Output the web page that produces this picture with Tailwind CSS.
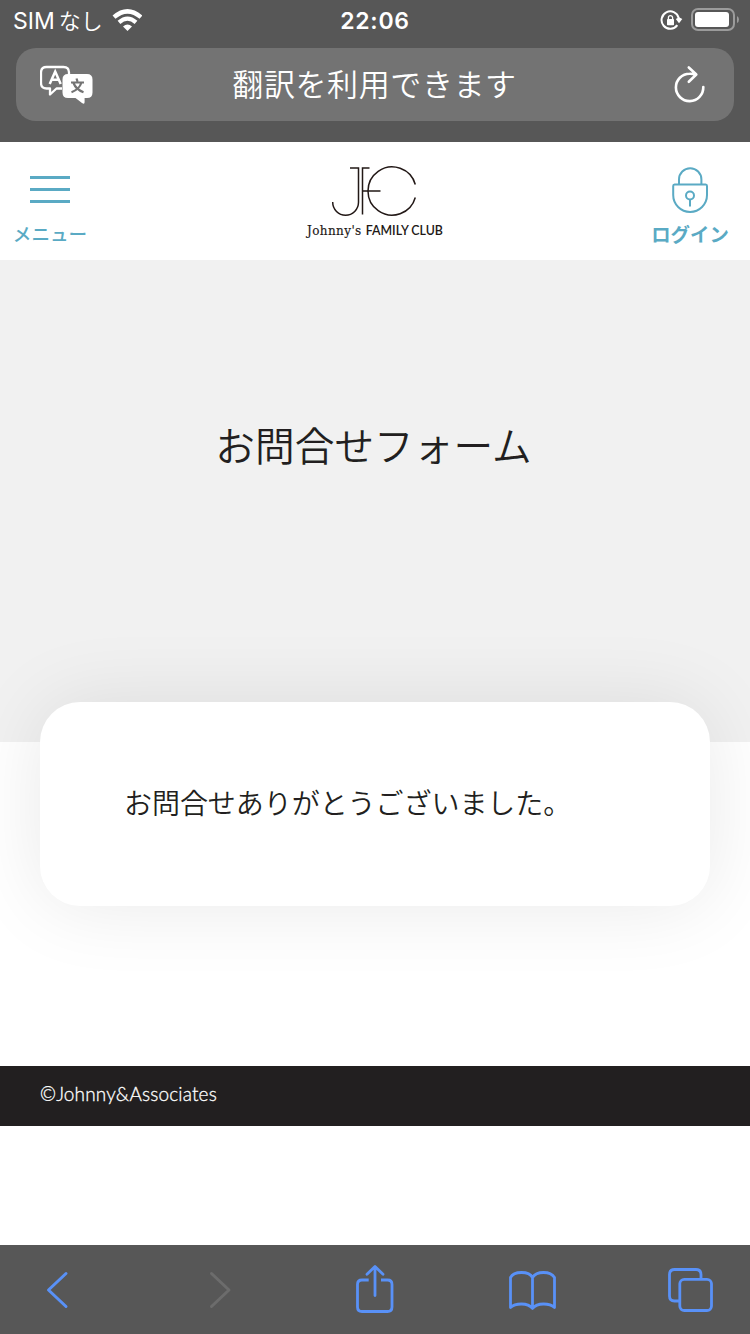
<!DOCTYPE html>
<html lang="ja">
  <head>
    <meta charset="UTF-8" />
    <meta name="viewport" content="width=device-width, initial-scale=1.0" />
    <title>お問合せフォーム</title>
    <script src="https://cdn.jsdelivr.net/npm/@tailwindcss/browser@4"></script>
  </head>
  <body
    class="flex h-[1334px] w-[750px] flex-col overflow-hidden bg-white font-['Noto_Sans_CJK_JP',sans-serif] text-[#221f20]"
  >
    <!-- Browser chrome -->
    <div class="h-[142px] shrink-0 bg-[#575757] px-4 text-white">
      <div class="grid h-12 grid-cols-3 items-start">
        <div class="-ml-[3px] flex h-10 items-center whitespace-nowrap">
          <span class="pt-px font-['Inter',sans-serif] text-[23px] leading-10">SIM</span>
          <span class="mb-[3px] ml-[4px] text-[22px] leading-10 font-[350]">なし</span>
          <svg class="ml-[9px] h-[23px] w-[30px]" viewBox="112 9 30 23" fill="none">
            <path d="M114 17.200Q127.500 5.500 141 17.200" stroke="white" stroke-width="4.400" />
            <path d="M119 22.300Q127.500 15 136 22.300" stroke="white" stroke-width="4.200" />
            <path d="M123 26.500Q127.500 22.700 132 26.500L127.500 31Z" fill="white" />
          </svg>
        </div>
        <div
          class="pt-px text-center font-['Inter',sans-serif] text-[23px] leading-10 font-semibold tracking-[0.7px]"
        >
          22:06
        </div>
        <div class="-mr-[5px] flex h-10 items-center justify-end gap-2">
          <svg class="h-[22px] w-[23px]" viewBox="660 9 23 22" fill="none">
            <path d="M678.700 18A8.700 8.700 0 1 0 677.300 25.200" stroke="white" stroke-width="2" />
            <path d="M675.800 19L679 17.300L682.300 19L679 23.300Z" fill="white" />
            <rect x="667" y="19" width="7" height="6.300" rx="0.800" fill="white" />
            <path d="M668.400 19.500V17.800a2.100 2.100 0 0 1 4.200 0V19.500" stroke="white" stroke-width="1.300" />
          </svg>
          <svg class="h-6 w-12" viewBox="691 8 48 24" fill="none">
            <rect x="692" y="9" width="42" height="21" rx="6" stroke="#9b9b9b" stroke-width="2" />
            <rect x="695" y="12" width="34" height="15" rx="3" fill="white" />
            <path d="M737 16v7q2-1 2-3.500T737 16" fill="#9b9b9b" />
          </svg>
        </div>
      </div>

      <!-- Address bar -->
      <div class="flex h-[73px] w-[718px] items-center justify-between rounded-[20px] bg-[#737373] pr-7 pl-6">
        <svg class="h-10 w-[53px]" viewBox="40 65 53 40" fill="none">
          <path
            d="M62 88.500H56.500L50 94.500V88.500H46.500Q41 88.500 41 83V72.500Q41 67 46.500 67H63.500Q69 67 69 72.500V74"
            stroke="white"
            stroke-width="2.300"
            stroke-linejoin="round"
          />
          <path d="M49.700 84L55.200 71.500L60.700 84M51.800 79.800H58.600" stroke="white" stroke-width="2.500" />
          <path
            d="M68 74H87Q92.500 74 92.500 79.500V92.500Q92.500 98 87 98H84.600V102Q84.600 105 82 103L75.500 98H68Q62.500 98 62.500 92.500V79.500Q62.500 74 68 74Z"
            fill="white"
          />
          <path
            d="M76.500 78.500L77.500 81.500M71 82.500H84M73.500 83Q76 89.500 83.500 92.200M81.300 83Q79 89.500 71.500 92.200"
            stroke="#737373"
            stroke-width="2.200"
          />
        </svg>
        <span class="mr-[18px] mb-1 text-[31px] leading-[46px] font-[350] tracking-[0.6px]">翻訳を利用できます</span>
        <svg class="mb-0.5 h-[38px] w-8" viewBox="674 64 32 38" fill="none" stroke="white" stroke-width="2.600" stroke-linecap="round" stroke-linejoin="round">
          <path d="M703.300 86A13.700 13.700 0 1 1 689.600 72.700Q693 72.600 695.800 73.800M688.800 66.500L696.300 73.500L688.800 80.800" />
        </svg>
      </div>
    </div>

    <!-- Site header -->
    <header class="flex h-[118px] shrink-0 justify-between text-[#5aaac4]">
      <button class="flex w-[100px] flex-col items-center pt-[34px]">
        <span class="flex w-10 flex-col gap-[9px]">
          <span class="h-[3px] bg-[#5aaac4]"></span>
          <span class="h-[3px] bg-[#5aaac4]"></span>
          <span class="h-[3px] bg-[#5aaac4]"></span>
        </span>
        <span class="mt-4 text-[18.6px] leading-7 font-medium">メニュー</span>
      </button>

      <div class="ml-5 flex w-[140px] flex-col items-center pt-[23px] text-[#221816]">
        <svg class="mr-0.5 h-[51px] w-[86px]" viewBox="331 165 86 51" fill="none" stroke="#221816" stroke-width="1.500">
          <path d="M350 168H358.500V202.300A12.900 12.900 0 0 1 332.700 202.300V202" />
          <path d="M369.500 168H362.500V214.500M362.500 191H380.500" />
          <path d="M415.300 184.500A24.100 24.100 0 1 0 415.300 197.500" />
        </svg>
        <div class="mt-[5px] flex items-baseline leading-5 whitespace-nowrap">
          <span class="font-['DejaVu_Serif',serif] text-[12px] tracking-[0.4px] [-webkit-text-stroke:0.15px]">Johnny's</span>
          <span class="ml-1 font-['Lato',sans-serif] text-[12.4px] font-semibold">FAMILY CLUB</span>
        </div>
      </div>

      <button class="flex w-[120px] flex-col items-center pt-[25px]">
        <svg class="h-[47px] w-[38px]" viewBox="671 167 38 47" fill="none" stroke="#5aaac4" stroke-width="2">
          <path d="M679 184V179.500a11.200 11.200 0 0 1 22.400 0V184" />
          <path d="M674.500 184.500H705.700Q707 184.500 707 186V195A16.900 16.900 0 0 1 673.200 195V186Q673.200 184.500 674.500 184.500Z" />
          <circle cx="690" cy="195.500" r="4" />
          <path d="M690 199.500V206.500" />
        </svg>
        <span class="mt-1.5 text-[19.4px] leading-7 font-bold">ログイン</span>
      </button>
    </header>

    <!-- Title -->
    <section class="h-[482px] shrink-0 bg-[#f1f1f1] pt-[154px] text-center">
      <h1 class="-ml-[3px] text-[39.7px] leading-[60px] font-[350]">お問合せフォーム</h1>
    </section>

    <!-- Message card -->
    <main
      class="relative mx-10 -mt-10 h-[204px] shrink-0 rounded-[40px] bg-white px-[84px] pt-[79px] shadow-[0_0_80px_rgba(0,0,0,0.09)]"
    >
      <p class="text-[28px] leading-[42px] font-[350] tracking-[-0.05px] whitespace-nowrap">お問合せありがとうございました。</p>
    </main>

    <footer
      class="mt-40 h-[60px] shrink-0 bg-[#221f20] pl-10 font-['Lato',sans-serif] text-[19px] leading-[55px] font-light tracking-[0.15px] text-white [-webkit-text-stroke:0.3px]"
    >
      ©Johnny&amp;Associates
    </footer>

    <!-- Bottom toolbar -->
    <nav class="mt-auto flex h-[89px] shrink-0 items-center bg-[#575757] pl-[46px] text-[#5991f7]">
      <svg class="h-[38px] w-6" viewBox="46 1271 24 38" fill="none" stroke="currentColor" stroke-width="3" stroke-linecap="round" stroke-linejoin="round">
        <path d="M66 1273.500L48.500 1290L66 1306.500" />
      </svg>
      <svg class="ml-[138px] h-[38px] w-6 text-[#6c6c6c]" viewBox="208 1271 24 38" fill="none" stroke="currentColor" stroke-width="3" stroke-linecap="round" stroke-linejoin="round">
        <path d="M211.500 1273.500L229 1290L211.500 1306.500" />
      </svg>
      <svg class="ml-[123px] h-[50px] w-10" viewBox="355 1265 40 50" fill="none" stroke="currentColor" stroke-width="2.800">
        <path d="M368.700 1280H362Q357.500 1280 357.500 1284.500V1307Q357.500 1311.500 362 1311.500H387.500Q392 1311.500 392 1307V1284.500Q392 1280 387.500 1280H381" />
        <path d="M375 1295.500V1267M367 1274.200L375 1266.500L383 1274.200" stroke-linecap="round" stroke-linejoin="round" />
      </svg>
      <svg class="ml-[113px] h-11 w-[50px]" viewBox="508 1268 50 44" fill="none" stroke="currentColor" stroke-width="2.800" stroke-linejoin="round">
        <path d="M532.500 1277.500Q530 1272.500 521.500 1272.500T510.500 1277.500V1307.500Q514 1304 521.500 1304T532.500 1308.500Q536 1304 543.500 1304T554.500 1307.500V1277.500Q551.500 1272.500 543.500 1272.500T532.500 1277.500V1308.500" />
      </svg>
      <svg class="ml-[110px] h-[46px] w-[46px]" viewBox="668 1267 46 46" fill="none" stroke="currentColor" stroke-width="2.800">
        <path d="M679.500 1301H674.500Q669.500 1301 669.500 1296V1274.500Q669.500 1269.500 674.500 1269.500H696Q701 1269.500 701 1274.500V1279" />
        <rect x="679.800" y="1279.300" width="31.700" height="31.200" rx="4.500" />
      </svg>
    </nav>
  </body>
</html>
